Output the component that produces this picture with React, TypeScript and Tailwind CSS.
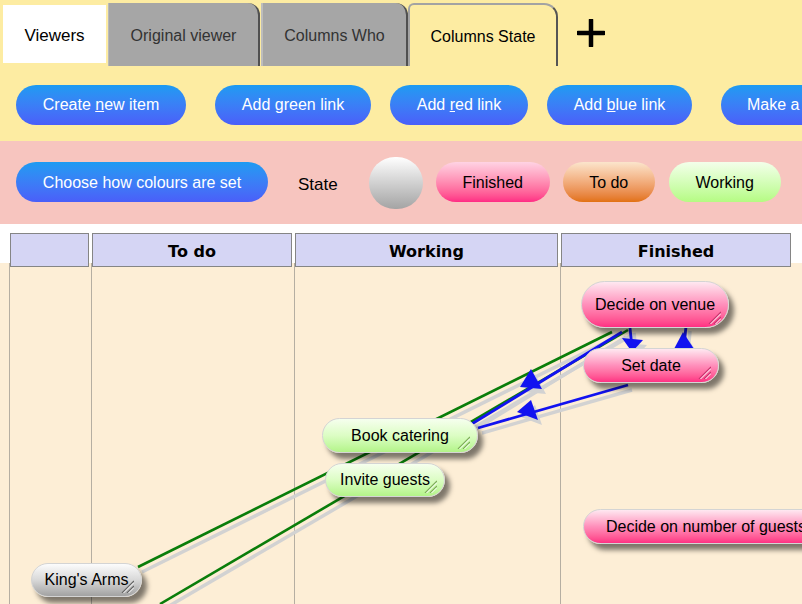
import React from "react";

type Kind = "pink" | "green" | "gray";

const grad: Record<Kind, string> = {
  pink: "bg-linear-to-b from-[#ffe8f1] via-[#ff8fbb] to-[#ff2e83]",
  green: "bg-linear-to-b from-[#f6ffee] via-[#dcfdc4] to-[#b3f488]",
  gray: "bg-linear-to-b from-[#fcfcfc] via-[#d8d8d8] to-[#a2a2a2]",
};
const gripDark: Record<Kind, string> = {
  pink: "#c8356f",
  green: "#7fae5a",
  gray: "#666666",
};

function Grip({ kind }: { kind: Kind }) {
  const c = gripDark[kind];
  return (
    <svg
      className="absolute right-[7px] bottom-[3px]"
      width="13"
      height="13"
      viewBox="0 0 13 13"
    >
      <line x1="1" y1="13" x2="13" y2="1" stroke={c} strokeWidth="1.3" />
      <line x1="2.5" y1="13" x2="13" y2="2.5" stroke="#ffffff" strokeWidth="1" />
      <line x1="6" y1="13" x2="13" y2="6" stroke={c} strokeWidth="1.3" />
      <line x1="7.5" y1="13" x2="13" y2="7.5" stroke="#ffffff" strokeWidth="1" />
    </svg>
  );
}

function NodeBody({ kind, label }: { kind: Kind; label: string }) {
  return (
    <>
      <span className="whitespace-nowrap">{label}</span>
      <Grip kind={kind} />
    </>
  );
}

const nodeBase =
  "absolute flex items-center justify-center rounded-full border border-[#d4d4d4] text-[16px] text-black shadow-[5px_6px_5px_rgba(0,0,0,0.5)]";

export default function App() {
  return (
    <div className="h-[604px] w-[802px] overflow-hidden bg-white font-['Liberation_Sans',Arial,sans-serif] text-[16px]">
      {/* Yellow area: tabs + toolbar */}
      <div className="bg-[#fdeca2]">
        <div className="flex h-[66px] items-end">
          <div className="mb-[3px] ml-[3px] flex h-[58px] w-[103px] items-center justify-center bg-white pt-[3px] text-[17px] text-black">
            Viewers
          </div>
          <div className="ml-[2px] flex h-[63px] w-[152px] items-center justify-center rounded-tr-[12px] border-l border-r-2 border-l-[#b9b9b9] border-r-[#505050] bg-[#a6a6a6] pt-[2px] text-[#333333]">
            Original viewer
          </div>
          <div className="ml-px flex h-[63px] w-[147px] items-center justify-center rounded-tr-[12px] border-l-2 border-r-2 border-l-[#bdbdbd] border-r-[#505050] bg-[#a6a6a6] pt-[2px] text-[#333333]">
            Columns Who
          </div>
          <div className="flex h-[63px] w-[150px] items-center justify-center rounded-tl-[6px] rounded-tr-[14px] border-2 border-b-0 border-[#a3a3a3] border-r-[#555555] bg-[#fdeca2] pt-[2px] text-black">
            Columns State
          </div>
          <svg className="mb-[19px] ml-[19px]" width="28" height="28" viewBox="0 0 28 28">
            <line x1="14" y1="1" x2="14" y2="27" stroke="#000" strokeWidth="4.5" strokeLinecap="round" />
            <line x1="1" y1="14" x2="27" y2="14" stroke="#000" strokeWidth="4.5" strokeLinecap="round" />
          </svg>
        </div>
        <div className="flex h-[75px] flex-nowrap items-start overflow-hidden pt-[19px]">
          <button className="ml-[16px] h-[40px] w-[170px] shrink-0 rounded-full bg-linear-to-b from-[#1b9bf2] to-[#4a5ef9] text-white">
            Create <span className="underline">n</span>ew item
          </button>
          <button className="ml-[29px] h-[40px] w-[156px] shrink-0 rounded-full bg-linear-to-b from-[#1b9bf2] to-[#4a5ef9] text-white">
            Add green link
          </button>
          <button className="ml-[19px] h-[40px] w-[138px] shrink-0 rounded-full bg-linear-to-b from-[#1b9bf2] to-[#4a5ef9] text-white">
            Add <span className="underline">r</span>ed link
          </button>
          <button className="ml-[19px] h-[40px] w-[145px] shrink-0 rounded-full bg-linear-to-b from-[#1b9bf2] to-[#4a5ef9] text-white">
            Add <span className="underline">b</span>lue link
          </button>
          <button className="ml-[29px] h-[40px] w-[170px] shrink-0 rounded-full bg-linear-to-b from-[#1b9bf2] to-[#4a5ef9] pl-[26px] text-left text-white">
            Make a copy
          </button>
        </div>
      </div>

      {/* Pink area: colour settings */}
      <div className="flex h-[83px] items-start bg-[#f7c5bf]">
        <button className="ml-[16px] mt-[21px] h-[40px] w-[252px] shrink-0 rounded-full bg-linear-to-b from-[#1b9bf2] to-[#4a5ef9] pt-px text-white">
          Choose how colours are set
        </button>
        <span className="ml-[30px] mt-[31px] text-[17px] text-black">State</span>
        <div className="ml-[31px] mt-[16px] h-[52px] w-[54px] shrink-0 rounded-full bg-linear-to-b from-white to-[#a4a4a4]" />
        <div className="ml-[13px] mt-[21px] flex h-[40px] w-[114px] shrink-0 items-center justify-center rounded-full bg-linear-to-b from-[#ffd3e4] to-[#ff2a84] pt-px text-black">
          Finished
        </div>
        <div className="ml-[13px] mt-[21px] flex h-[40px] w-[92px] shrink-0 items-center justify-center rounded-full bg-linear-to-b from-[#fbe5cc] to-[#e2710e] pt-px text-black">
          To do
        </div>
        <div className="ml-[14px] mt-[21px] flex h-[40px] w-[112px] shrink-0 items-center justify-center rounded-full bg-linear-to-b from-[#f3ffea] to-[#b5fb82] pt-px text-black">
          Working
        </div>
      </div>

      {/* Column viewer */}
      <div className="bg-white pt-[9px]">
        <div className="relative z-10 flex h-[34px] font-['DejaVu_Sans',Verdana,sans-serif] text-[16px] font-bold text-black">
          <div className="ml-[10px] h-[34px] w-[79px] border border-[#858585] bg-[#d5d5f4]" />
          <div className="ml-[3px] flex h-[34px] w-[200px] items-center justify-center border border-[#858585] bg-[#d5d5f4] pt-[3px]">
            To do
          </div>
          <div className="ml-[3px] flex h-[34px] w-[263px] items-center justify-center border border-[#858585] bg-[#d5d5f4] pt-[3px]">
            Working
          </div>
          <div className="ml-[3px] flex h-[34px] w-[230px] items-center justify-center border border-[#858585] bg-[#d5d5f4] pt-[3px]">
            Finished
          </div>
        </div>

        <div className="relative -mt-[4px] h-[341px] overflow-hidden bg-[#fdeed6]">
          <div className="flex h-full">
            <div className="w-[9px] shrink-0" />
            <div className="w-[82px] shrink-0 border-l border-[#b5aea2]" />
            <div className="w-[203px] shrink-0 border-l border-[#b5aea2]" />
            <div className="w-[266px] shrink-0 border-l border-[#b5aea2]" />
            <div className="flex-1 border-l border-[#b5aea2]" />
          </div>

          <svg
            className="absolute left-0 top-0"
            width="802"
            height="341"
            viewBox="0 263 802 341"
          >
            {/* shadows */}
            <g stroke="#d2d2d2" strokeWidth="3.5" fill="none">
              <line x1="142" y1="572" x2="616" y2="337" />
              <line x1="164" y1="609" x2="632" y2="335" />
              <line x1="474" y1="430" x2="626" y2="337" />
              <line x1="482" y1="433" x2="632" y2="390" />
              <line x1="634" y1="333" x2="636" y2="352" />
              <line x1="690" y1="331" x2="688" y2="352" />
            </g>
            <g fill="#d2d2d2">
              <polygon points="535,374 524,392 546,394" />
              <polygon points="521,417 535,405 542,425" />
              <polygon points="626,343 647,345 636,357" />
              <polygon points="687,337 678,354 698,354" />
            </g>
            {/* green links */}
            <g stroke="#0a7d0a" strokeWidth="2.6" fill="none">
              <line x1="138" y1="567" x2="612" y2="332" />
              <line x1="160" y1="604" x2="628" y2="330" />
            </g>
            {/* blue links */}
            <g stroke="#1212f0" strokeWidth="2.8" fill="none">
              <line x1="470" y1="425" x2="622" y2="332" />
              <line x1="478" y1="428" x2="628" y2="385" />
              <line x1="630" y1="328" x2="632" y2="347" />
              <line x1="686" y1="326" x2="684" y2="347" />
            </g>
            <g fill="#1212f0">
              <polygon points="531,369 520,387 542,389" />
              <polygon points="517,412 531,400 538,420" />
              <polygon points="622,338 643,340 632,352" />
              <polygon points="683,332 674,349 694,349" />
            </g>
          </svg>

          {/* nodes */}
          <div className={`${nodeBase} ${grad.pink} left-[581px] top-[18px] h-[47px] w-[148px]`}>
            <NodeBody kind="pink" label="Decide on venue" />
          </div>
          <div className={`${nodeBase} ${grad.pink} left-[583px] top-[85px] h-[35px] w-[136px]`}>
            <NodeBody kind="pink" label="Set date" />
          </div>
          <div className={`${nodeBase} ${grad.green} left-[322px] top-[155px] h-[35px] w-[156px]`}>
            <NodeBody kind="green" label="Book catering" />
          </div>
          <div className={`${nodeBase} ${grad.green} left-[325px] top-[200px] h-[34px] w-[120px]`}>
            <NodeBody kind="green" label="Invite guests" />
          </div>
          <div className={`${nodeBase} ${grad.pink} left-[583px] top-[246px] h-[35px] w-[246px]`}>
            <NodeBody kind="pink" label="Decide on number of guests" />
          </div>
          <div className={`${nodeBase} ${grad.gray} left-[31px] top-[300px] h-[34px] w-[111px]`}>
            <NodeBody kind="gray" label="King's Arms" />
          </div>
        </div>
      </div>
    </div>
  );
}
